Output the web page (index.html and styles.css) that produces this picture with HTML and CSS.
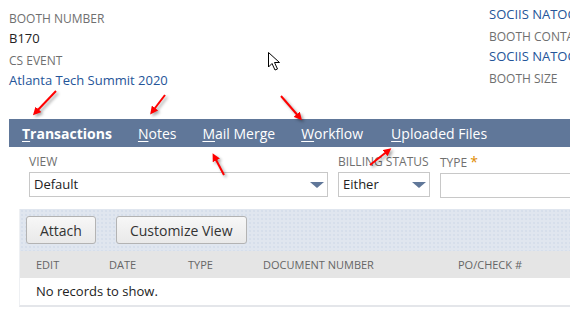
FILE: index.html
```html
<!DOCTYPE html>
<html lang="en">
<head>
  <meta charset="UTF-8">
  <title>Booth Record</title>
  <link rel="stylesheet" href="styles.css">
</head>
<body>
  <div class="page">
    <!-- Record header fields -->
    <div class="fields">
      <div class="col col-left">
        <div class="field">
          <div class="label">Booth Number</div>
          <div class="value">B170</div>
        </div>
        <div class="field">
          <div class="label">CS Event</div>
          <div class="value"><a href="#">Atlanta Tech Summit 2020</a></div>
        </div>
      </div>
      <div class="col col-right">
        <div class="field">
          <div class="value"><a href="#">SOCIIS NATOC</a></div>
        </div>
        <div class="field">
          <div class="label">Booth Conta</div>
          <div class="value"><a href="#">SOCIIS NATOC</a></div>
        </div>
        <div class="field">
          <div class="label">Booth Size</div>
        </div>
      </div>
    </div>

    <!-- Subtabs -->
    <div class="tabs">
      <span class="tab active"><u>T</u>ransactions</span>
      <span class="tab"><u>N</u>otes</span>
      <span class="tab"><u>M</u>ail Merge</span>
      <span class="tab"><u>W</u>orkflow</span>
      <span class="tab"><u>U</u>ploaded Files</span>
    </div>

    <!-- Filters -->
    <div class="filters">
      <div class="filter filter-view">
        <div class="label">View</div>
        <div class="select">Default<span class="caret"></span></div>
      </div>
      <div class="filter filter-billing">
        <div class="label">Billing Status</div>
        <div class="select">Either<span class="caret"></span></div>
      </div>
      <div class="filter filter-type">
        <div class="label">Type <span class="req">*</span></div>
        <div class="input"></div>
      </div>
    </div>

    <!-- Sublist -->
    <div class="sublist">
      <div class="toolbar">
        <button class="btn">Attach</button>
        <button class="btn">Customize View</button>
      </div>
      <div class="grid-head">
        <span class="c-edit">Edit</span>
        <span class="c-date">Date</span>
        <span class="c-type">Type</span>
        <span class="c-doc">Document Number</span>
        <span class="c-po">PO/Check #</span>
      </div>
      <div class="grid-row">No records to show.</div>
    </div>
  </div>

  <!-- Annotation overlay: red arrows and mouse pointer -->
  <svg class="overlay" width="570" height="322" viewBox="0 0 570 322">
    <defs>
      <marker id="head" markerWidth="8" markerHeight="8" refX="5" refY="4" orient="auto" markerUnits="userSpaceOnUse">
        <path d="M0,0 L8,4 L0,8 Z" fill="#ff0000"/>
      </marker>
    </defs>
    <g class="arrows" stroke="#ff0000" stroke-width="2" fill="none" marker-end="url(#head)">
      <line x1="56" y1="91" x2="35" y2="113"/>
      <line x1="165" y1="95" x2="152" y2="112"/>
      <line x1="281" y1="96" x2="300" y2="118"/>
      <line x1="224" y1="175" x2="214" y2="156"/>
      <line x1="370" y1="165" x2="389" y2="150"/>
    </g>
    <path class="pointer" d="M268.5,52.5 L268.5,67 L272,63.5 L275,70 L277.5,69 L274.5,62.5 L279.5,62.5 Z" fill="#fff" stroke="#000" stroke-width="1"/>
  </svg>
</body>
</html>
```

FILE: styles.css
```css
body {
  margin: 0;
  font-family: 'Open Sans', Arial, sans-serif;
  color: #222;
  background: #fff;
  width: 570px;
  height: 322px;
  overflow: hidden;
  position: relative;
}
a { color: #255599; text-decoration: none; }
.page { width: 570px; overflow: hidden; }

.fields { display: flex; height: 119px; }
.col { white-space: nowrap; }
.col-left { padding: 11px 0 0 9px; width: 480px; }
.col-right { padding-top: 5px; overflow: hidden; flex: 1; }
.field { margin-bottom: 6px; }
.label {
  font-size: 12px;
  line-height: 16px;
  color: #6f6f6f;
  text-transform: uppercase;
  margin-bottom: 2px;
}
.value { font-size: 13px; line-height: 18px; }

.tabs {
  margin-left: 9px;
  height: 28px;
  background: #607799;
  display: flex;
  align-items: center;
}
.tab {
  position: relative;
  padding: 0 13px;
  font-size: 14px;
  color: #fff;
  white-space: nowrap;
}
.tab:last-child { padding-left: 15px; }
.tab u { text-underline-offset: 2px; }
.tab.active { font-weight: 700; }
.tab.active::after {
  content: '';
  position: absolute;
  left: 50%;
  bottom: -9px;
  margin-left: -6px;
  border: 6px solid transparent;
  border-bottom: 5px solid #fff;
  border-top: 0;
}

.filters {
  display: flex;
  gap: 10px;
  padding: 7px 0 0 29px;
  height: 62px;
  box-sizing: border-box;
  white-space: nowrap;
}
.filter .label { margin-bottom: 2px; }
.filter-view { width: 299px; }
.filter-billing { width: 92px; }
.filter-type { flex: 1; }
.req { color: #e08a00; font-size: 14px; }
.select, .input {
  position: relative;
  height: 25px;
  box-sizing: border-box;
  border: 1px solid #c8c8c8;
  font-size: 13px;
  line-height: 23px;
  padding-left: 4px;
  background: #fff;
}
.input { margin-right: -10px; }
.caret {
  position: absolute;
  right: 3px;
  top: 9px;
  border: 7px solid transparent;
  border-top: 6px solid #607799;
  border-bottom: 0;
}

.sublist {
  margin: 0 0 0 19px;
  border-left: 1px solid #eef0f3;
  border-bottom: 2px solid #e4e6ea;
}
.toolbar {
  height: 42px;
  background-color: #e0e6ef;
  background-image: radial-gradient(#cbd4e6 0.6px, transparent 0.8px);
  background-size: 4px 4px;
  display: flex;
  align-items: center;
  gap: 20px;
  padding-left: 6px;
}
.btn {
  font-family: 'Open Sans', Arial, sans-serif;
  font-size: 14px;
  color: #333;
  height: 28px;
  padding: 0 13px;
  border: 1px solid #b3b3b3;
  border-radius: 3px;
  background: linear-gradient(#f7f7f7, #e9e9e9);
}
.grid-head {
  height: 27px;
  background: #e5e5e5;
  font-size: 11px;
  color: #666;
  text-transform: uppercase;
  display: flex;
  align-items: center;
  white-space: nowrap;
}
.grid-head span { display: block; }
.c-edit { width: 73px; padding-left: 16px; }
.c-date { width: 79px; }
.c-type { width: 75px; }
.c-doc { width: 195px; }
.grid-row {
  height: 27px;
  line-height: 27px;
  font-size: 13px;
  padding-left: 16px;
}

.overlay {
  position: absolute;
  left: 0;
  top: 0;
  pointer-events: none;
}
.arrows { filter: drop-shadow(2px 2px 1.5px rgba(0,0,0,0.35)); }
```
